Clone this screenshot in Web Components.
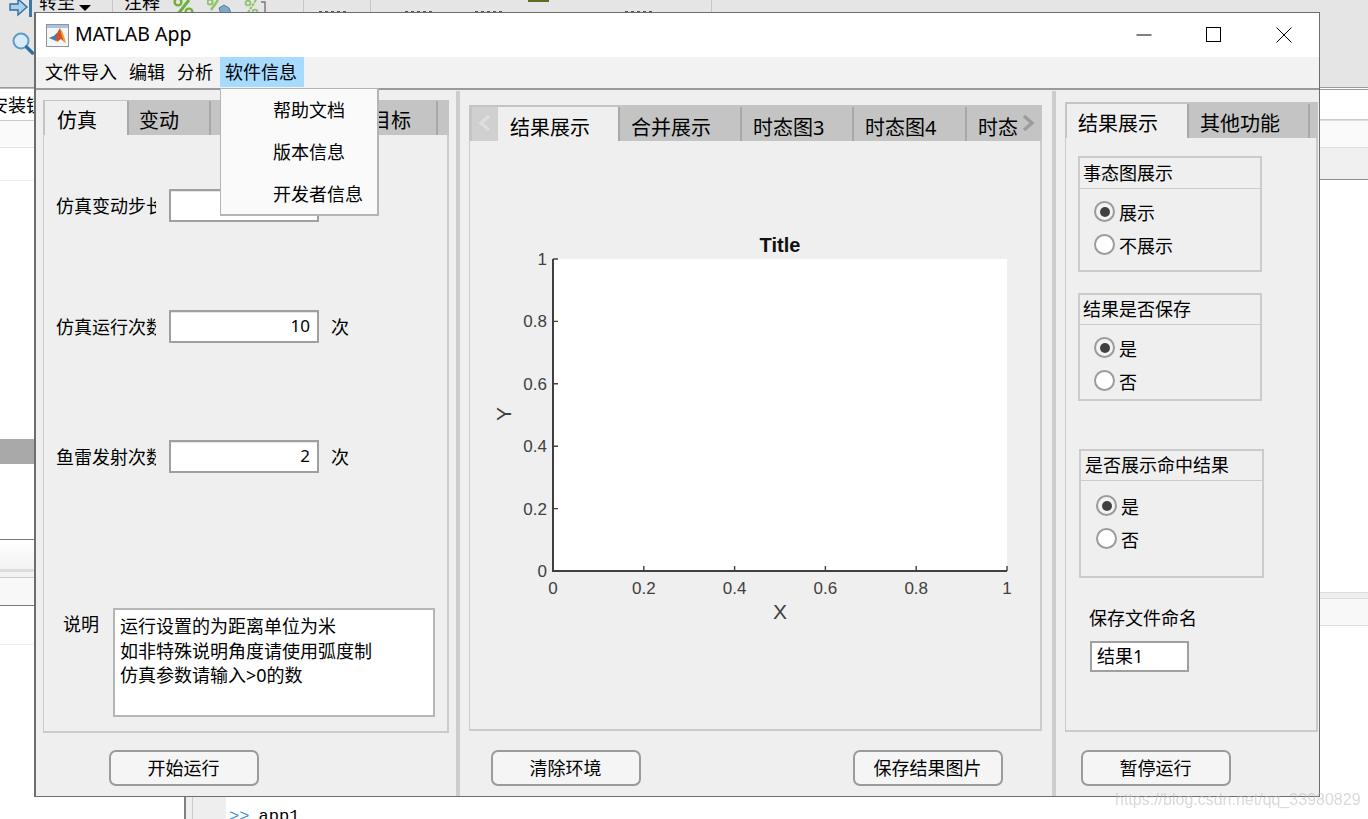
<!DOCTYPE html>
<html lang="zh-CN">
<head>
<meta charset="utf-8">
<title>MATLAB App</title>
<style>
  html, body { margin: 0; height: 100%; overflow: hidden; background: #fff; }
  body {
    width: 1368px;
    height: 819px;
    position: relative;
    font: 18px "Noto Sans", "Noto Sans CJK SC", sans-serif;
    color: #000;
  }
  .watermark {
    position: absolute;
    left: 1115px;
    top: 791px;
    font: 16px "Liberation Sans", sans-serif;
    color: rgba(185, 185, 185, 0.55);
    filter: blur(0.4px);
  }
</style>
</head>
<body>
<desktop-backdrop></desktop-backdrop>

<matlab-window title="MATLAB App">
  <menu-item>文件导入</menu-item>
  <menu-item>编辑</menu-item>
  <menu-item>分析</menu-item>
  <menu-item active>软件信息</menu-item>

  <drop-menu slot="popup">
    <div>帮助文档</div>
    <div>版本信息</div>
    <div>开发者信息</div>
  </drop-menu>

  <app-pane slot="left" style="--pad: 9px 7px 0 7px; --foot: 63px; --foot-pad: 17px 0 0 66px">
    <tab-group style="--strip: 35px; --tab-top: 1px; --strip-left: 2px; --tab-lh: 39px">
      <tab-item slot="tabs" selected width="84" style="--tab-pad: 12px">仿真</tab-item>
      <tab-item slot="tabs" width="82" style="--tab-pad: 10px">变动</tab-item>
      <tab-item slot="tabs" width="149"></tab-item>
      <tab-item slot="tabs" width="78" style="--tab-pad: 11px">目标</tab-item>
      <left-form></left-form>
    </tab-group>
    <app-button slot="footer">开始运行</app-button>
  </app-pane>

  <app-pane slot="middle" style="--pad: 14px 10px 0 9px; --foot: 65px; --foot-pad: 19px 0 0 22px">
    <tab-group style="--strip: 36px; --tab-top: 2px; --strip-left: 3px; --tab-lh: 41px">
      <tab-arrow slot="tabs" dir="left"></tab-arrow>
      <tab-item slot="tabs" selected width="122" style="--tab-pad: 12px">结果展示</tab-item>
      <tab-item slot="tabs" width="122">合并展示</tab-item>
      <tab-item slot="tabs" width="112">时态图3</tab-item>
      <tab-item slot="tabs" width="113">时态图4</tab-item>
      <tab-item slot="tabs" width="48" plain>时态</tab-item>
      <tab-arrow slot="tabs" dir="right"></tab-arrow>
      <plot-axes></plot-axes>
    </tab-group>
    <app-button slot="footer">清除环境</app-button>
    <app-button slot="footer" style="margin-left: 212px">保存结果图片</app-button>
  </app-pane>

  <app-pane slot="right" style="--pad: 11px 1px 0 9px; --foot: 64px; --foot-pad: 18px 0 0 16px">
    <tab-group style="--strip: 36px; --tab-top: 2px; --strip-left: 2px; --tab-lh: 40px; --tab-pad: 11px">
      <tab-item slot="tabs" selected width="122">结果展示</tab-item>
      <tab-item slot="tabs" width="121">其他功能</tab-item>
      <right-form></right-form>
    </tab-group>
    <app-button slot="footer">暂停运行</app-button>
  </app-pane>
</matlab-window>

<div class="watermark">https://blog.csdn.net/qq_33980829</div>

<script>
class DesktopBackdrop extends HTMLElement {
  constructor() {
    super();
    this.attachShadow({ mode: "open" });
  }

  connectedCallback() {
    this.shadowRoot.innerHTML = `
      <style>
        :host { display: flex; flex-direction: column; width: 1368px; height: 819px; overflow: hidden; }
        .toolbar { display: flex; height: 87px; background: #e5e5e5; border-bottom: 1px solid #9a9a9a; flex: none; }
        .sec { border-right: 1px solid #c6c6c6; height: 87px; overflow: hidden; display: flex; flex: none; box-sizing: border-box; }
        .icons { display: flex; flex-direction: column; width: 39px; padding-left: 9px; box-sizing: border-box; }
        .icons svg { display: block; }
        .cut { margin-top: -7px; line-height: 19px; height: 19px; font-size: 18px; }
        .tri { width: 0; height: 0; border: 6.5px solid transparent; border-top: 6px solid #000; border-bottom: 0; margin: 5px 0 0 4px; }
        .pct { margin: 0 0 0 12px; }
        .dash { width: 30px; height: 1px; margin-top: 11px; background: repeating-linear-gradient(90deg, #555 0 3px, transparent 3px 6px); }
        .body { display: flex; justify-content: space-between; flex: none; height: 709px; }
        .rail { display: flex; flex-direction: column; }
        .rail div { box-sizing: border-box; flex: none; overflow: hidden; white-space: nowrap; }
        .left { width: 34px; }
        .right { width: 48px; }
        .bottom { display: flex; flex: 1; background: #fff; }
        .gutter { width: 40px; margin-left: 184px; background: #eee; border-left: 2px solid #808080; position: relative; }
        .gutter i { display: block; width: 1px; height: 100%; background: #ccc; margin-left: 6px; }
        .prompt { font: 17px "Liberation Mono", monospace; margin: 10px 0 0 3px; white-space: pre; line-height: 20px; word-spacing: -1px; }
        .prompt b { font-weight: 400; color: #4a8fd0; }
      </style>
      <div class="toolbar">
        <div class="sec" style="width: 113px">
          <div class="icons">
            <svg width="25" height="18" viewBox="0 0 25 18" style="margin-top: -1px">
              <path d="M1 5h8V0l9 8-9 8v-5H1z" fill="#a9cfe9" stroke="#2f6f9f" stroke-width="1.4"/>
              <rect x="20" y="-2" width="3" height="20" fill="#3c78a8"/>
            </svg>
            <svg width="23" height="24" viewBox="0 0 23 24" style="margin: 15px 0 0 3px">
              <circle cx="9" cy="9" r="7.5" fill="#d9ebf6" stroke="#5f9cc4" stroke-width="2"/>
              <path d="M14.5 15l6 6" stroke="#2f6f9f" stroke-width="3.4" stroke-linecap="round"/>
            </svg>
          </div>
          <div class="cut">转至</div><div class="tri"></div>
        </div>
        <div class="sec" style="width: 191px; padding-left: 11px">
          <div class="cut">注释</div>
          <svg class="pct" width="22" height="14" viewBox="0 0 22 14"><path d="M17 0L6 14" stroke="#6fae3a" stroke-width="3"/><circle cx="6" cy="2" r="3.4" fill="none" stroke="#6fae3a" stroke-width="2.4"/><circle cx="17" cy="12" r="3.4" fill="none" stroke="#6fae3a" stroke-width="2.4"/></svg>
          <svg class="pct" width="26" height="14" viewBox="0 0 26 14" style="margin-left: 13px"><path d="M11 0L4 10" stroke="#8fc26a" stroke-width="2.4"/><circle cx="3" cy="2" r="2.6" fill="none" stroke="#8fc26a" stroke-width="2"/><path d="M12 8l5-3 5 3 2 5h-4v1h-6z" fill="#7fa9c9" stroke="#4f7fa5"/></svg>
          <svg class="pct" width="24" height="14" viewBox="0 0 24 14" style="margin-left: 10px"><path d="M13 0L4 14" stroke="#8fc26a" stroke-width="2" stroke-dasharray="3 1"/><circle cx="5" cy="3" r="2.4" fill="none" stroke="#8fc26a" stroke-width="1.8"/><circle cx="12" cy="12" r="2.4" fill="none" stroke="#8fc26a" stroke-width="1.8"/><path d="M18 2h4v12h-3" fill="none" stroke="#777" stroke-width="1.4"/></svg>
        </div>
        <div class="sec" style="width: 67px; padding-left: 15px"><div class="dash"></div></div>
        <div class="sec" style="width: 341px">
          <div class="dash" style="margin-left: 34px"></div>
          <div class="dash" style="margin-left: 40px"></div>
          <div class="dash" style="margin-left: 23px; width: 0"></div>
          <div style="width: 21px; height: 2px; background: #5d6b24; margin-left: 0"></div>
          <div class="dash" style="margin-left: 76px"></div>
        </div>
      </div>
      <div class="body">
        <div class="rail left">
          <div style="height: 32px; background: #fff; border-top: 1px solid #bbb; line-height: 32px; text-indent: -10px; font-size: 18px">安装镜</div>
          <div style="height: 28px; background: #fafafa; border-top: 1px solid #ccc; border-bottom: 1px solid #e2e2e2"></div>
          <div style="height: 33px; background: #fff; border-bottom: 1px solid #eee"></div>
          <div style="height: 258px; background: #fff"></div>
          <div style="height: 25px; background: #a9a9a9"></div>
          <div style="height: 76px; background: #fff; border-bottom: 1px solid #777"></div>
          <div style="height: 32px; background: linear-gradient(#fff, #f3f3f3); border-bottom: 3px solid #ddd"></div>
          <div style="height: 6px; background: #f2f2f2; border-bottom: 1px solid #ccc"></div>
          <div style="height: 28px; background: #f8f8f8; border-bottom: 1px solid #777"></div>
          <div style="height: 39px; background: #fff; border-bottom: 1px solid #eee"></div>
        </div>
        <div class="rail right">
          <div style="height: 1px; background: #9a9a9a; margin-top: 1px"></div>
          <div style="height: 30px; background: #fff; border-bottom: 1px solid #ccc"></div>
          <div style="height: 28px; background: #fafafa; border-top: 1px solid #ddd; border-bottom: 1px solid #ddd"></div>
          <div style="height: 32px; background: #f0f0f0; border-bottom: 1px solid #8f8f8f"></div>
          <div style="height: 412px; background: #fff"></div>
          <div style="height: 6px; background: #eee; border-top: 1px solid #ddd"></div>
          <div style="height: 28px; background: #f8f8f8; border-top: 1px solid #ddd; border-bottom: 1px solid #ddd"></div>
        </div>
      </div>
      <div class="bottom">
        <div class="gutter"><i></i></div>
        <div class="prompt"><b>&gt;&gt;</b> app1</div>
      </div>
    `;
  }
}

class MatlabWindow extends HTMLElement {
  constructor() {
    super();
    this.attachShadow({ mode: "open" });
  }

  connectedCallback() {
    this.shadowRoot.innerHTML = `
      <style>
        :host {
          position: absolute;
          left: 34px;
          top: 12px;
          width: 1286px;
          height: 785px;
          box-sizing: border-box;
          display: flex;
          flex-direction: column;
          background: #efefef;
          border: 1px solid #6e6e6e;
          border-left-width: 2px;
        }
        .title { display: flex; align-items: center; height: 44px; background: #fff; flex: none; }
        .title svg.logo { margin-left: 10px; }
        .name { margin-left: 6px; flex: 1; font: 19.5px "Noto Sans", sans-serif; padding-bottom: 4px; }
        .ctl { width: 70px; height: 44px; display: flex; align-items: center; justify-content: center; }
        .menu { display: flex; height: 31px; padding-left: 4px; background: #f2f2f2; flex: none; }
        .panes { flex: 1; display: flex; border-top: 2px solid #9a9a9a; padding-top: 1px; min-height: 0; }
        .split { width: 4px; background: #cdcdcd; flex: none; }
        ::slotted([slot="left"]) { width: 420px; }
        ::slotted([slot="middle"]) { width: 592px; }
        ::slotted([slot="right"]) { flex: 1; }
      </style>
      <div class="title">
        <svg class="logo" width="23" height="23" viewBox="0 0 23 23">
          <rect x=".5" y=".5" width="22" height="22" fill="#f4f6f8" stroke="#8e9499"/>
          <rect x="1" y="1" width="21" height="3" fill="#a9c4e2"/>
          <path d="M3 14l5-2 3-3 3-5 4 14-3-3-4 3-2-4z" fill="#d9531e"/>
          <path d="M14 4l4 14 2 1-3-10z" fill="#f09a2a"/>
          <path d="M3 14l5-2 3-3-1 8z" fill="#3f7fc1"/>
        </svg>
        <div class="name">${this.getAttribute("title")}</div>
        <div class="ctl"><svg width="16" height="16" viewBox="0 0 16 16"><path d="M.5 8h15" stroke="#000"/></svg></div>
        <div class="ctl"><svg width="16" height="16" viewBox="0 0 16 16"><rect x=".5" y=".5" width="14" height="14" fill="none" stroke="#000"/></svg></div>
        <div class="ctl"><svg width="16" height="16" viewBox="0 0 16 16"><path d="M.5.5l15 15M15.500.5l-15 15" stroke="#000" fill="none"/></svg></div>
      </div>
      <div class="menu"><slot></slot></div>
      <div class="panes">
        <slot name="left"></slot>
        <div class="split"></div>
        <slot name="middle"></slot>
        <div class="split"></div>
        <slot name="right"></slot>
      </div>
      <slot name="popup"></slot>
    `;
  }
}

class MenuItem extends HTMLElement {
  constructor() {
    super();
    this.attachShadow({ mode: "open" });
  }

  connectedCallback() {
    this.shadowRoot.innerHTML = `
      <style>
        :host { display: block; padding: 0 7px 0 5px; line-height: 30px; height: 30px; white-space: nowrap; }
        :host([active]) { background: #a6dbff; }
      </style>
      <slot></slot>
    `;
  }
}

class DropMenu extends HTMLElement {
  constructor() {
    super();
    this.attachShadow({ mode: "open" });
  }

  connectedCallback() {
    this.shadowRoot.innerHTML = `
      <style>
        :host {
          position: absolute;
          left: 184px;
          top: 75px;
          width: 159px;
          height: 128px;
          box-sizing: border-box;
          background: #fafafa;
          border: 1px solid #b4b4b4;
          border-width: 1px 2px 2px 1px;
          padding-left: 52px;
          line-height: 42px;
          z-index: 2;
        }
      </style>
      <slot></slot>
    `;
  }
}

class AppPane extends HTMLElement {
  constructor() {
    super();
    this.attachShadow({ mode: "open" });
  }

  connectedCallback() {
    this.shadowRoot.innerHTML = `
      <style>
        :host { display: flex; flex-direction: column; box-sizing: border-box; height: 100%; flex: none; padding: var(--pad); }
        .foot { height: var(--foot); padding: var(--foot-pad); box-sizing: border-box; display: flex; flex: none; }
        .main { flex: 1; min-height: 0; display: flex; flex-direction: column; }
      </style>
      <div class="main"><slot></slot></div>
      <div class="foot"><slot name="footer"></slot></div>
    `;
  }
}

class TabGroup extends HTMLElement {
  constructor() {
    super();
    this.attachShadow({ mode: "open" });
  }

  connectedCallback() {
    this.shadowRoot.innerHTML = `
      <style>
        :host { display: flex; flex-direction: column; flex: 1; min-height: 0; box-sizing: border-box; }
        .strip {
          display: flex;
          height: var(--strip);
          padding: var(--tab-top) 0 0 var(--strip-left);
          background: #c4c4c4;
          box-sizing: border-box;
          flex: none;
        }
        .page {
          flex: 1;
          min-height: 0;
          box-sizing: border-box;
          border: 1px solid #cbcbcb;
          border-width: 0 2px 2px 1px;
          display: flex;
          flex-direction: column;
        }
      </style>
      <div class="strip"><slot name="tabs"></slot></div>
      <div class="page"><slot></slot></div>
    `;
  }
}

class TabItem extends HTMLElement {
  constructor() {
    super();
    this.attachShadow({ mode: "open" });
  }

  connectedCallback() {
    this.shadowRoot.innerHTML = `
      <style>
        :host {
          display: block;
          box-sizing: border-box;
          width: ${this.getAttribute("width")}px;
          height: 100%;
          padding-left: var(--tab-pad, 11px);
          font-size: 20px;
          line-height: var(--tab-lh);
          white-space: nowrap;
          border-right: 2px solid #a8a8a8;
          flex: none;
        }
        :host([selected]) { background: #efefef; }
        :host([plain]) { border-right: 0; }
      </style>
      <slot></slot>
    `;
  }
}

class TabArrow extends HTMLElement {
  constructor() {
    super();
    this.attachShadow({ mode: "open" });
  }

  connectedCallback() {
    const left = this.getAttribute("dir") === "left";
    this.shadowRoot.innerHTML = `
      <style>
        :host { display: flex; align-items: center; justify-content: center; width: 26px; height: 100%; flex: none; box-sizing: border-box; padding-bottom: 2px; }
        :host([dir="left"]) { background: #d0d0d0; }
      </style>
      <svg width="14" height="16" viewBox="0 0 14 16">
        <path d="${left ? "M11 1L3 8l8 7" : "M3 1l8 7-8 7"}" fill="none" stroke="${left ? "#dedede" : "#9c9c9c"}" stroke-width="3.4"/>
      </svg>
    `;
  }
}

class LeftForm extends HTMLElement {
  constructor() {
    super();
    this.attachShadow({ mode: "open" });
  }

  connectedCallback() {
    this.shadowRoot.innerHTML = `
      <style>
        :host { display: flex; flex-direction: column; padding-top: 54px; }
        .run { margin-top: 88px; }
        .fire { margin-top: 97px; }
        .note { display: flex; margin-top: 135px; padding-left: 19px; }
        .note label { width: 37px; line-height: 32px; flex: none; }
        .box {
          width: 322px;
          height: 109px;
          margin-left: 13px;
          box-sizing: border-box;
          background: #fff;
          border: 2px solid #b6b6b6;
          padding: 4px 0 0 5px;
          line-height: 24.5px;
          white-space: pre-line;
        }
      </style>
      <num-field label="仿真变动步长"></num-field>
      <num-field class="run" label="仿真运行次数" value="10" unit="次"></num-field>
      <num-field class="fire" label="鱼雷发射次数" value="2" unit="次"></num-field>
      <div class="note">
        <label>说明</label>
        <div class="box">运行设置的为距离单位为米
如非特殊说明角度请使用弧度制
仿真参数请输入&gt;0的数</div>
      </div>
    `;
  }
}

class NumField extends HTMLElement {
  constructor() {
    super();
    this.attachShadow({ mode: "open" });
  }

  connectedCallback() {
    this.shadowRoot.innerHTML = `
      <style>
        :host { display: flex; align-items: center; height: 33px; padding-left: 12px; }
        .label { width: 100px; overflow: hidden; white-space: nowrap; flex: none; padding-bottom: 2px; }
        .input {
          width: 150px;
          height: 33px;
          margin-left: 13px;
          box-sizing: border-box;
          background: #fff;
          border: 2px solid #a0a0a0;
          box-shadow: inset 0 1px 0 #e6e6e6;
          padding-right: 7px;
          text-align: right;
          font: 17px/27px "Noto Sans", sans-serif;
          flex: none;
        }
        .unit { margin-left: 12px; padding-bottom: 2px; }
      </style>
      <div class="label">${this.getAttribute("label")}</div>
      <div class="input">${this.getAttribute("value") || ""}</div>
      <div class="unit">${this.getAttribute("unit") || ""}</div>
    `;
  }
}

class PlotAxes extends HTMLElement {
  constructor() {
    super();
    this.attachShadow({ mode: "open" });
  }

  connectedCallback() {
    const labels = ["0", "0.2", "0.4", "0.6", "0.8", "1"];
    const x0 = 553, x1 = 1007, y0 = 571, y1 = 259;
    let marks = "";
    labels.forEach((t, i) => {
      const x = x0 + (x1 - x0) * i / 5;
      const y = y0 + (y1 - y0) * i / 5;
      marks += `<path d="M${x} ${y0}v-5M${x0} ${y}h5" stroke="#404040" stroke-width="1.4" fill="none"/>`;
      marks += `<text x="${x}" y="${y0 + 23}" text-anchor="middle">${t}</text>`;
      marks += `<text x="${x0 - 6}" y="${y + 6}" text-anchor="end">${t}</text>`;
    });
    this.shadowRoot.innerHTML = `
      <style>
        :host { display: block; flex: 1; min-height: 0; }
        svg { display: block; width: 570px; height: 588px; font: 17px "Liberation Sans", sans-serif; }
        text { fill: #404040; }
        .title { font-weight: 700; font-size: 20px; fill: #111; }
        .axis { font-size: 21px; }
      </style>
      <svg viewBox="470 141 570 588">
        <rect x="${x0}" y="${y1}" width="${x1 - x0}" height="${y0 - y1}" fill="#fff"/>
        <path d="M${x0} ${y1}V${y0}H${x1}" stroke="#404040" stroke-width="2" fill="none"/>
        ${marks}
        <text class="title" x="780" y="252" text-anchor="middle">Title</text>
        <text class="axis" x="780" y="619" text-anchor="middle">X</text>
        <text class="axis" transform="translate(511 414) rotate(-90)" text-anchor="middle">Y</text>
      </svg>
    `;
  }
}

class RightForm extends HTMLElement {
  constructor() {
    super();
    this.attachShadow({ mode: "open" });
  }

  connectedCallback() {
    this.shadowRoot.innerHTML = `
      <style>
        :host { display: flex; flex-direction: column; padding: 18px 0 0 12px; }
        .g2 { margin-top: 21px; }
        .g3 { margin: 48px 0 0 1px; }
        .caption { margin: 27px 0 0 11px; line-height: 26px; }
        .file {
          width: 99px;
          height: 31px;
          margin: 10px 0 0 12px;
          box-sizing: border-box;
          background: #fff;
          border: 2px solid #a0a0a0;
          padding-left: 5px;
          line-height: 27px;
        }
      </style>
      <radio-group tall title="事态图展示" first="展示" second="不展示" height="116"></radio-group>
      <radio-group class="g2" title="结果是否保存" first="是" second="否" height="108" tight></radio-group>
      <radio-group class="g3" title="是否展示命中结果" first="是" second="否" height="129" wide></radio-group>
      <div class="caption">保存文件命名</div>
      <div class="file">结果1</div>
    `;
  }
}

class RadioGroup extends HTMLElement {
  constructor() {
    super();
    this.attachShadow({ mode: "open" });
  }

  connectedCallback() {
    this.shadowRoot.innerHTML = `
      <style>
        :host {
          display: block;
          box-sizing: border-box;
          width: 184px;
          height: ${this.getAttribute("height")}px;
          border: 2px solid #cbcbcb;
          flex: none;
        }
        :host([wide]) { width: 185px; }
        .head { height: 30px; line-height: 29px; padding-left: 3px; border-bottom: 1px solid #cbcbcb; box-sizing: border-box; white-space: nowrap; }
        :host([tall]) .head { height: 31px; line-height: 31px; }
        :host([wide]) .head { padding-left: 4px; }
        .rows { padding: 7px 0 0 14px; }
        :host([tall]) .rows { padding-top: 6px; }
        :host([tight]) .rows { padding-top: 6px; }
        :host([wide]) .rows { padding: 8px 0 0 15px; }
        .row { display: flex; align-items: center; height: 33px; }
        .dot {
          width: 21px;
          height: 21px;
          box-sizing: border-box;
          border: 2px solid #9b9b9b;
          border-radius: 50%;
          background: #fff;
          margin-right: 4px;
          display: flex;
          align-items: center;
          justify-content: center;
          flex: none;
        }
        .dot.on { background: #f3f3f3; }
        .dot.on::after { content: ""; width: 10px; height: 10px; border-radius: 50%; background: #404040; }
      </style>
      <div class="head">${this.getAttribute("title")}</div>
      <div class="rows">
        <div class="row"><span class="dot on"></span>${this.getAttribute("first")}</div>
        <div class="row"><span class="dot"></span>${this.getAttribute("second")}</div>
      </div>
    `;
  }
}

class AppButton extends HTMLElement {
  constructor() {
    super();
    this.attachShadow({ mode: "open" });
  }

  connectedCallback() {
    this.shadowRoot.innerHTML = `
      <style>
        :host {
          display: block;
          box-sizing: border-box;
          width: 150px;
          height: 36px;
          background: #f5f5f5;
          border: 2px solid #9b9b9b;
          border-radius: 7px;
          text-align: center;
          line-height: 33px;
          padding-right: 1px;
          flex: none;
        }
      </style>
      <slot></slot>
    `;
  }
}

customElements.define("desktop-backdrop", DesktopBackdrop);
customElements.define("matlab-window", MatlabWindow);
customElements.define("menu-item", MenuItem);
customElements.define("drop-menu", DropMenu);
customElements.define("app-pane", AppPane);
customElements.define("tab-group", TabGroup);
customElements.define("tab-item", TabItem);
customElements.define("tab-arrow", TabArrow);
customElements.define("left-form", LeftForm);
customElements.define("num-field", NumField);
customElements.define("plot-axes", PlotAxes);
customElements.define("right-form", RightForm);
customElements.define("radio-group", RadioGroup);
customElements.define("app-button", AppButton);
</script>
</body>
</html>
